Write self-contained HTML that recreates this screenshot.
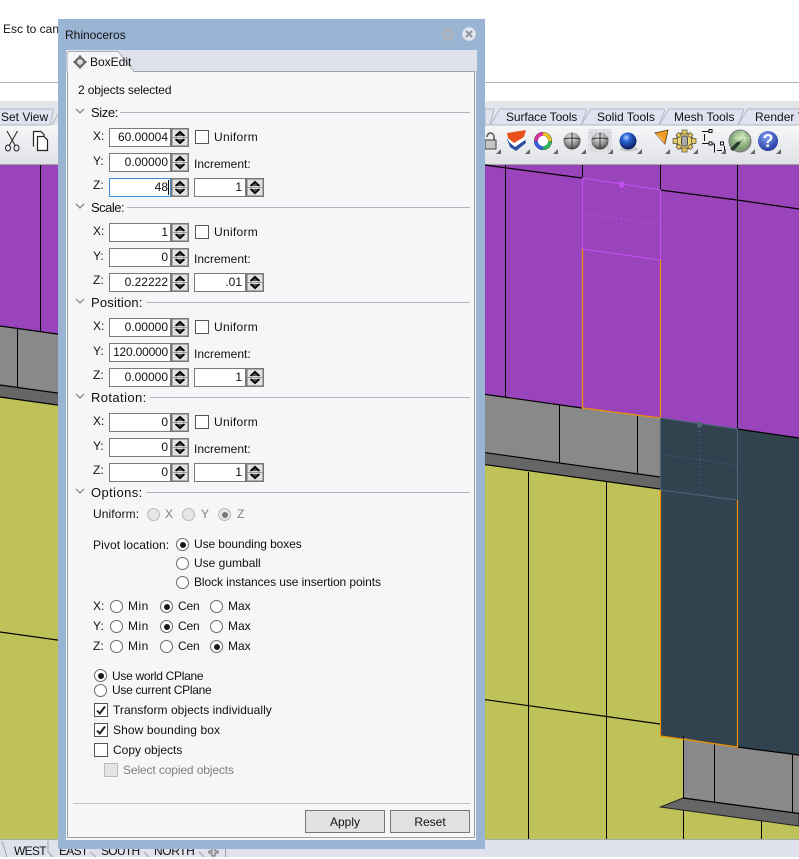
<!DOCTYPE html>
<html><head><meta charset="utf-8"><title>Rhinoceros BoxEdit</title>
<style>
html,body{margin:0;padding:0}
body{width:799px;height:857px;overflow:hidden;position:relative;background:#fff;font:12px/16px "Liberation Sans",sans-serif;color:#111}
.a,.t,.n,.r,.c,.b{position:absolute}
.t{white-space:nowrap;height:16px}
.d{color:#808080}
.n{box-sizing:border-box;height:19px;background:#fff;border:1px solid #7a7a7a;text-align:right;line-height:17px;padding-right:2px;color:#111}
.r{box-sizing:border-box;width:13px;height:13px;border:1px solid #6a6a6a;border-radius:50%;background:#fff}
.r.on::after{content:"";position:absolute;left:2.5px;top:2.5px;width:6px;height:6px;border-radius:50%;background:#1a1a1a}
.r.off{background:#e6e6e6;border-color:#b8b8b8}
.r.off.on::after{background:#777}
.c{box-sizing:border-box;width:14px;height:14px;border:1px solid #555;background:#fff;left:94px}
.b{box-sizing:border-box;top:810px;height:23px;width:80px;background:#e1e1e1;border:1px solid #777;text-align:center;line-height:23px;color:#111}
.h{font-size:13px}
.u{letter-spacing:.3px}
.ln{position:absolute;height:1px;background:#b4b4bc;top:112px}
svg{position:absolute;overflow:visible}
.g{position:absolute;left:0;width:799px;height:0}
.sp{width:18px;height:19px}
.bt{letter-spacing:-.7px}
</style></head><body>

<svg width="0" height="0" style="left:0;top:0"><defs>
<symbol id="spin" viewBox="0 0 18 19"><rect x=".75" y=".75" width="16.500" height="17.500" fill="#e2e2e2" stroke="#777" stroke-width="1.500"/><line x1="1" y1="9.500" x2="17" y2="9.500" stroke="#999"/><path d="M4.500 8 L9 3.800 L13.500 8" fill="#555" stroke="#000" stroke-width="1.800"/><path d="M4.500 11 L9 15.200 L13.500 11" fill="#555" stroke="#000" stroke-width="1.800"/></symbol>
<symbol id="chev" viewBox="0 0 10 6"><path d="M1 1 L5 5 L9 1" fill="none" stroke="#8a8a8a" stroke-width="1.300"/></symbol>
<symbol id="tick" viewBox="0 0 14 14"><path d="M3 7.500 L5.800 10.500 L11 3.500" fill="none" stroke="#222" stroke-width="2"/></symbol>
<radialGradient id="gs" cx=".45" cy=".3" r=".75"><stop offset="0" stop-color="#eee"/><stop offset=".55" stop-color="#999"/><stop offset="1" stop-color="#333"/></radialGradient>
<radialGradient id="bs" cx=".4" cy=".3" r=".75"><stop offset="0" stop-color="#bcd4ff"/><stop offset=".3" stop-color="#2a66d8"/><stop offset="1" stop-color="#08124a"/></radialGradient>
<radialGradient id="hs" cx=".4" cy=".3" r=".8"><stop offset="0" stop-color="#7f9df0"/><stop offset="1" stop-color="#1a2f98"/></radialGradient>
<radialGradient id="gl" cx=".55" cy=".35" r=".7"><stop offset="0" stop-color="#cfe8b8"/><stop offset=".7" stop-color="#7da274"/><stop offset="1" stop-color="#8a8f88"/></radialGradient>
<linearGradient id="tb" x1="0" y1="0" x2="0" y2="1"><stop offset="0" stop-color="#f6f7f8"/><stop offset="1" stop-color="#dfe1e6"/></linearGradient>
</defs></svg>

<!-- chrome and scene -->
<svg width="799" height="857" viewBox="0 0 799 857" style="left:0;top:0">
<rect x="0" y="82" width="799" height="1" fill="#a9b0b8"/>
<rect x="0" y="101" width="799" height="25" fill="#e3e5ea"/>
<rect x="0" y="125" width="799" height="40" fill="url(#tb)"/>
<rect x="0" y="164" width="799" height="1" fill="#a0a2a8"/>
<!-- tabs -->
<path d="M-5 125 V109 H50 Q54 109 53 112 L50 125Z" fill="#dfe3f0" stroke="#b4b6c4"/>
<path d="M52 125 L58 114" stroke="#b4b6c4" fill="none"/>
<path d="M485 125 V109 H494 L490 125Z" fill="#dfe3f0" stroke="#b4b6c4"/>
<path d="M490 125 L500 109 H584 Q588 109 586 112 L581 125Z" fill="#dfe3f0" stroke="#b4b6c4"/>
<path d="M581 125 L591 109 H662 Q666 109 664 112 L659 125Z" fill="#dfe3f0" stroke="#b4b6c4"/>
<path d="M659 125 L669 109 H741 Q745 109 743 112 L738 125Z" fill="#dfe3f0" stroke="#b4b6c4"/>
<path d="M738 125 L748 109 H805 V125Z" fill="#dfe3f0" stroke="#b4b6c4"/>

<!-- viewport -->
<rect x="0" y="165" width="799" height="674" fill="#bfc159"/>
<path d="M0 165 H799 V438 L737 429 L660 418 L582 408 L485 395 L0 326Z" fill="#9a44bc"/>
<path d="M0 326 L485 395 L582 408 L660 418 V477 L0 385Z" fill="#898989"/>
<path d="M0 385 L660 477 V489 L0 397Z" fill="#666"/>
<path d="M660 418 L737 429 L799 438 V755 L737 747 L660 736Z" fill="#30434f"/>
<path d="M683 738 L737 747 L799 755 V813.500 L683 798Z" fill="#898989"/>
<path d="M660.500 807 L683 798 L799 813.500 V826Z" fill="#666" stroke="#222"/>
<g stroke="#000" stroke-width="1" fill="none" shape-rendering="crispEdges">
<path d="M40.500 165 V332 M17.500 328 V387 M505.500 165 V397 M582.500 165 V178 M660.500 165 V190 M737.500 165 V429"/>
<path d="M559.500 405 V463 M637.500 416 V473 M528.500 472 V839 M606.500 482 V839 M714.500 744 V802 M792.500 755 V813 M683.500 810 V839 M761.500 821 V839 M683.500 736 V798"/>
</g>
<g stroke="#000" stroke-width="1.200" fill="none">
<path d="M485 165 L582 178 M660 190 L737 200 L799 209"/>
<path d="M0 326 L582 408 M737 429 L799 438 M660 477 L0 385 M660 489 L0 397 M0 632 L660 724 M737 747 L799 755 M683 798 L799 813.500"/>
</g>
<!-- selection purple -->
<path d="M582.500 178 L660.500 190 V260 L582.500 249Z" fill="none" stroke="#c050f0" stroke-width="1.100"/>
<rect x="619" y="182" width="5" height="5" fill="#c050f0"/>
<path d="M621.500 187 V252 M584 214 L658 224" stroke="#c050f0" stroke-width="1.300" stroke-dasharray="1 3" fill="none"/>
<path d="M582.500 249 V408 L660.500 418 V260" fill="none" stroke="#f09000" stroke-width="1.200"/>
<!-- selection dark -->
<path d="M660.500 418 L737.500 429 V500 L660.500 490Z" fill="none" stroke="#4a6478" stroke-width="1.100"/>
<rect x="697" y="422" width="5" height="5" fill="#4a6478"/>
<path d="M699.500 427 V491 M664 455 L737 465" stroke="#4a6478" stroke-width="1.300" stroke-dasharray="1 3" fill="none"/>
<path d="M660.500 490 V736 L737.500 747 V500" fill="none" stroke="#f09000" stroke-width="1.200"/>
<!-- bottom bar -->
<rect x="0" y="839" width="799" height="18" fill="#dfe2ec"/>
<rect x="0" y="839" width="799" height="1" fill="#a0a8b0"/>
<path d="M2 841 L7 857 M48 841 V852 L53 857 M90 852 L96 857 M144 852 L149 857 M199 852 L204 857 M225.500 846 V857" stroke="#a0a4b0" fill="none"/>
<path d="M212 849 V851 H209 V853 H212 V856 H215 V853 H218 V851 H215 V849" stroke="#666" fill="none"/>

<!-- left toolbar icons -->
<g fill="none" stroke="#222" stroke-width="1">
<path d="M7 131 L15.500 146 M17.500 131 L9 146"/><ellipse cx="8" cy="148" rx="2.500" ry="3"/><ellipse cx="16.500" cy="148" rx="2.500" ry="3"/>
<path d="M33.500 146.500 V131.500 H41 L44 134.500 V137" fill="#fff" stroke-width="1.200"/><path d="M37.500 136.500 H44 L47.500 140 V150.500 H37.500Z" fill="#fff" stroke-width="1.200"/>
</g>

<!-- right toolbar icons -->
<path d="M487 137 a3.500 4 0 0 1 7 0 v3" fill="none" stroke="#666" stroke-width="1.800"/>
<rect x="485" y="140" width="11" height="9" fill="#c4c4c4" stroke="#444"/>
<path d="M507 139 L524 135 L526 143 L516 151 L510 147Z" fill="#2f4fa0"/>
<path d="M507 137 L526 135 L525 140 L515 147 L509 142Z" fill="#fff"/>
<path d="M507 133 L526 130 L524 137 L514 143 L508 138Z" fill="#e8501e"/>
<circle cx="543" cy="141" r="9" fill="#222"/>
<g fill="none" stroke-width="3.400">
<path d="M543 134 A7 7 0 0 1 550 141" stroke="#e8c020"/>
<path d="M550 141 A7 7 0 0 1 543 148" stroke="#30b860"/>
<path d="M543 148 A7 7 0 0 1 536 141" stroke="#3060e0"/>
<path d="M536 141 A7 7 0 0 1 543 134" stroke="#d830a0"/>
</g>
<circle cx="543" cy="141" r="5.200" fill="#fff"/>
<circle cx="572" cy="141" r="8.500" fill="url(#gs)"/>
<path d="M563.500 139 Q572 137 580.500 139 M572 132.500 V149.500" stroke="#333" stroke-width="1" fill="none"/>
<rect x="588" y="129" width="24" height="24" fill="#e2e2e6"/>
<path d="M588 133 H612 M588 137 H612 M588 145 H612 M588 149 H612 M592 129 V153 M596 129 V153 M604 129 V153 M608 129 V153" stroke="#c4c4c8" stroke-dasharray="1 1" fill="none"/>
<circle cx="600" cy="141" r="8.500" fill="url(#gs)"/>
<path d="M591.500 139 Q600 137 608.500 139 M600 132.500 V149.500" stroke="#333" stroke-width="1" fill="none"/>
<ellipse cx="629" cy="149" rx="9" ry="2.500" fill="#c8c8c8"/>
<circle cx="628" cy="141" r="8.500" fill="url(#bs)"/>
<path d="M655 133 L668 130 L665 144Z" fill="#f09a20" stroke="#5a3a10" stroke-width=".8"/>
<path d="M655 133 L662 138 L665 144" fill="#ffd890" opacity=".8"/>
<g transform="translate(684.500 141)">
<circle r="8.500" fill="#f0d878" stroke="#554" stroke-width="1"/>
<path d="M-2.500 -11 H2.500 V-7 H-2.500Z M-2.500 7 H2.500 V11 H-2.500Z M-11.500 -2.500 H-7 V2.500 H-11.500Z M7 -2.500 H11.500 V2.500 H7Z M-8.500 -6 L-6 -8.500 L-3 -6 L-6 -3Z M8.500 -6 L6 -8.500 L3 -6 L6 -3Z M-8.500 6 L-6 8.500 L-3 6 L-6 3Z M8.500 6 L6 8.500 L3 6 L6 3Z" fill="#e8c860" stroke="#554" stroke-width=".7"/>
<rect x="-3" y="-5" width="6" height="10" rx="2" fill="#aaa" stroke="#333" stroke-width=".8"/>
</g>
<g fill="none" stroke="#111" stroke-width="1">
<path d="M702 131.500 H709 M702 143.500 H710 M704.500 134 V141 M711 144 H714.500 V152.500 M724.500 146 V152.500 M717 150.500 H722"/>
<rect x="709" y="129.500" width="3" height="3" fill="#fff"/><rect x="709" y="142" width="3" height="3" fill="#fff"/><rect x="720.500" y="142" width="3" height="3" fill="#fff"/>
</g>
<circle cx="740" cy="141" r="11" fill="url(#gl)" stroke="#777"/>
<path d="M730 149 L737 142 L742 141 L744 137 L739 145 L733 151Z" fill="#2a3a2a"/>
<path d="M742 131 L746 142 M734 138 L750 138" stroke="#e0f0d0" stroke-width=".7" fill="none"/>
<circle cx="768" cy="141" r="10" fill="url(#hs)"/>
<g fill="#666">
<path d="M501 149 V154 H496Z M530 149 V154 H525Z M558 149 V154 H553Z M586 149 V154 H581Z M613 149 V154 H608Z M642 149 V154 H637Z M670 149 V154 H665Z M698 149 V154 H693Z M726 149 V154 H721Z M755 149 V154 H750Z M781 149 V154 H776Z"/>
</g>
</svg>

<div class="t" style="left:3px;top:21px">Esc to cancel</div>
<div class="t" style="left:1px;top:109px">Set View</div>
<div class="t" style="left:506px;top:109px;letter-spacing:-.1px">Surface Tools</div>
<div class="t" style="left:597px;top:109px">Solid Tools</div>
<div class="t" style="left:674px;top:109px">Mesh Tools</div>
<div class="t" style="left:755px;top:109px">Render Tools</div>
<div class="t" style="left:759px;top:132px;font:bold 18px/18px 'Liberation Sans',sans-serif;color:#fff;height:18px;width:18px;text-align:center">?</div>
<div class="t bt" style="left:14px;top:843px">WEST</div>
<div class="t bt" style="left:59px;top:843px">EAST</div>
<div class="t bt" style="left:101px;top:843px">SOUTH</div>
<div class="t bt" style="left:154px;top:843px;letter-spacing:-.4px">NORTH</div>

<!-- dialog -->
<div class="a" style="left:58px;top:19px;width:427px;height:830px;background:#9ab4d3"></div>
<div class="a" style="left:66px;top:50px;width:411px;height:21px;background:#dfe2ec"></div>
<div class="a" style="left:66px;top:71px;width:410px;height:769px;background:#f5f6f8"></div>
<div class="a" style="left:67px;top:71px;width:408px;height:767px;box-sizing:border-box;background:#f5f6f8;border:1px solid #a0a0a0"></div>
<svg width="80" height="24" style="left:60px;top:50px">
<path d="M7 21.500 V4 Q7 1.500 10 1.500 H58 L74 21.500" fill="#f5f6f8" stroke="#a8a8b4"/>
<rect x="8" y="20" width="65" height="3" fill="#f5f6f8"/>
<g fill="none" stroke="#555" stroke-width="1">
<path d="M20 6 L26 12 L20 18 L14 12Z"/><circle cx="20" cy="12" r="3.500" fill="#ddd"/><path d="M20 5 V8 M20 16 V19 M13 12 H16 M24 12 H27"/>
</g>
</svg>
<div class="t" style="left:65px;top:27px">Rhinoceros</div>
<div class="t" style="left:90px;top:54px">BoxEdit</div>
<svg width="40" height="18" style="left:440px;top:25px">
<g transform="translate(8 9)" fill="#aab4c0"><circle r="5"/><path d="M-1.800 -7 H1.800 V7 H-1.800Z M-7 -1.800 H7 V1.800 H-7Z M-5.800 -3.300 L-3.300 -5.800 L5.800 3.300 L3.300 5.800Z M5.800 -3.300 L3.300 -5.800 L-5.800 3.300 L-3.300 5.800Z"/><circle r="2" fill="#9ab4d3"/></g>
<circle cx="29" cy="9" r="6.800" fill="#e2e6ee"/><path d="M26 6 L32 12 M32 6 L26 12" stroke="#8c94a0" stroke-width="2"/>
</svg>
<div class="t" style="left:78px;top:82px;letter-spacing:-.15px">2 objects selected</div>

<!-- Size -->
<div class="g" style="top:0">
<svg width="10" height="6" style="left:75px;top:108px"><use href="#chev"/></svg>
<div class="t h" style="left:91px;top:105px;letter-spacing:-.4px">Size:</div><div class="ln" style="left:120px;width:350px"></div>
<div class="t" style="left:93px;top:128px">X:</div><div class="t" style="left:93px;top:153px">Y:</div><div class="t" style="left:93px;top:177px">Z:</div>
<div class="n" style="left:109px;top:128px;width:62px;padding-right:2px">60.00004</div><svg class="sp" style="left:171px;top:128px"><use href="#spin"/></svg>
<div class="c" style="left:195px;top:130px"></div><div class="t u" style="left:214px;top:129px">Uniform</div>
<div class="n" style="left:109px;top:153px;width:62px">0.00000</div><svg class="sp" style="left:171px;top:153px"><use href="#spin"/></svg>
<div class="t" style="left:194px;top:156px">Increment:</div>
<div class="n" style="left:109px;top:178px;width:62px;border-color:#3f8fd8">48</div><div class="a" style="left:168px;top:180px;width:1px;height:15px;background:#000"></div><svg class="sp" style="left:171px;top:178px"><use href="#spin"/></svg>
<div class="n" style="left:194px;top:178px;width:52px;padding-right:3px">1</div><svg class="sp" style="left:246px;top:178px"><use href="#spin"/></svg>
</div>

<!-- Scale -->
<div class="g" style="top:95px">
<svg width="10" height="6" style="left:75px;top:108px"><use href="#chev"/></svg>
<div class="t h" style="left:91px;top:105px;letter-spacing:-.5px">Scale:</div><div class="ln" style="left:127px;width:343px"></div>
<div class="t" style="left:93px;top:128px">X:</div><div class="t" style="left:93px;top:153px">Y:</div><div class="t" style="left:93px;top:177px">Z:</div>
<div class="n" style="left:109px;top:128px;width:62px">1</div><svg class="sp" style="left:171px;top:128px"><use href="#spin"/></svg>
<div class="c" style="left:195px;top:130px"></div><div class="t u" style="left:214px;top:129px">Uniform</div>
<div class="n" style="left:109px;top:153px;width:62px">0</div><svg class="sp" style="left:171px;top:153px"><use href="#spin"/></svg>
<div class="t" style="left:194px;top:156px">Increment:</div>
<div class="n" style="left:109px;top:178px;width:62px">0.22222</div><svg class="sp" style="left:171px;top:178px"><use href="#spin"/></svg>
<div class="n" style="left:194px;top:178px;width:52px;padding-right:3px">.01</div><svg class="sp" style="left:246px;top:178px"><use href="#spin"/></svg>
</div>

<!-- Position -->
<div class="g" style="top:190px">
<svg width="10" height="6" style="left:75px;top:108px"><use href="#chev"/></svg>
<div class="t h" style="left:91px;top:105px;letter-spacing:.2px">Position:</div><div class="ln" style="left:146px;width:324px"></div>
<div class="t" style="left:93px;top:128px">X:</div><div class="t" style="left:93px;top:153px">Y:</div><div class="t" style="left:93px;top:177px">Z:</div>
<div class="n" style="left:109px;top:128px;width:62px">0.00000</div><svg class="sp" style="left:171px;top:128px"><use href="#spin"/></svg>
<div class="c" style="left:195px;top:130px"></div><div class="t u" style="left:214px;top:129px">Uniform</div>
<div class="n" style="left:109px;top:153px;width:62px;letter-spacing:-.2px">120.00000</div><svg class="sp" style="left:171px;top:153px"><use href="#spin"/></svg>
<div class="t" style="left:194px;top:156px">Increment:</div>
<div class="n" style="left:109px;top:178px;width:62px">0.00000</div><svg class="sp" style="left:171px;top:178px"><use href="#spin"/></svg>
<div class="n" style="left:194px;top:178px;width:52px;padding-right:3px">1</div><svg class="sp" style="left:246px;top:178px"><use href="#spin"/></svg>
</div>

<!-- Rotation -->
<div class="g" style="top:285px">
<svg width="10" height="6" style="left:75px;top:108px"><use href="#chev"/></svg>
<div class="t h" style="left:91px;top:105px;letter-spacing:.4px">Rotation:</div><div class="ln" style="left:150px;width:320px"></div>
<div class="t" style="left:93px;top:128px">X:</div><div class="t" style="left:93px;top:153px">Y:</div><div class="t" style="left:93px;top:177px">Z:</div>
<div class="n" style="left:109px;top:128px;width:62px">0</div><svg class="sp" style="left:171px;top:128px"><use href="#spin"/></svg>
<div class="c" style="left:195px;top:130px"></div><div class="t u" style="left:214px;top:129px">Uniform</div>
<div class="n" style="left:109px;top:153px;width:62px">0</div><svg class="sp" style="left:171px;top:153px"><use href="#spin"/></svg>
<div class="t" style="left:194px;top:156px">Increment:</div>
<div class="n" style="left:109px;top:178px;width:62px">0</div><svg class="sp" style="left:171px;top:178px"><use href="#spin"/></svg>
<div class="n" style="left:194px;top:178px;width:52px;padding-right:3px">1</div><svg class="sp" style="left:246px;top:178px"><use href="#spin"/></svg>
</div>

<!-- Options -->
<svg width="10" height="6" style="left:75px;top:488px"><use href="#chev"/></svg>
<div class="t h" style="left:91px;top:485px;letter-spacing:.4px">Options:</div><div class="ln" style="left:146px;width:324px;top:492px"></div>
<div class="t" style="left:93px;top:506px;letter-spacing:.1px">Uniform:</div>
<div class="r off" style="left:147px;top:508px"></div><div class="t d" style="left:165px;top:506px">X</div>
<div class="r off" style="left:182px;top:508px"></div><div class="t d" style="left:201px;top:506px">Y</div>
<div class="r off on" style="left:218px;top:508px"></div><div class="t d" style="left:237px;top:506px">Z</div>

<div class="t" style="left:93px;top:537px;letter-spacing:.1px">Pivot location:</div>
<div class="r on" style="left:176px;top:538px"></div><div class="t" style="left:194px;top:536px;letter-spacing:-.1px">Use bounding boxes</div>
<div class="r" style="left:176px;top:557px"></div><div class="t" style="left:194px;top:555px">Use gumball</div>
<div class="r" style="left:176px;top:576px"></div><div class="t" style="left:194px;top:574px;letter-spacing:-.09px">Block instances use insertion points</div>

<div class="t" style="left:93px;top:598px">X:</div>
<div class="r" style="left:110px;top:600px"></div><div class="t" style="left:128px;top:598px;letter-spacing:.5px">Min</div>
<div class="r on" style="left:160px;top:600px"></div><div class="t" style="left:178px;top:598px;letter-spacing:-.2px">Cen</div>
<div class="r" style="left:210px;top:600px"></div><div class="t" style="left:228px;top:598px">Max</div>
<div class="t" style="left:93px;top:618px">Y:</div>
<div class="r" style="left:110px;top:620px"></div><div class="t" style="left:128px;top:618px;letter-spacing:.5px">Min</div>
<div class="r on" style="left:160px;top:620px"></div><div class="t" style="left:178px;top:618px;letter-spacing:-.2px">Cen</div>
<div class="r" style="left:210px;top:620px"></div><div class="t" style="left:228px;top:618px">Max</div>
<div class="t" style="left:93px;top:638px">Z:</div>
<div class="r" style="left:110px;top:640px"></div><div class="t" style="left:128px;top:638px;letter-spacing:.5px">Min</div>
<div class="r" style="left:160px;top:640px"></div><div class="t" style="left:178px;top:638px;letter-spacing:-.2px">Cen</div>
<div class="r on" style="left:210px;top:640px"></div><div class="t" style="left:228px;top:638px">Max</div>

<div class="r on" style="left:94px;top:669px"></div><div class="t" style="left:112px;top:668px;letter-spacing:-.3px">Use world CPlane</div>
<div class="r" style="left:94px;top:684px"></div><div class="t" style="left:112px;top:682px;letter-spacing:-.3px">Use current CPlane</div>

<div class="c" style="top:703px"></div><svg width="14" height="14" style="left:94px;top:703px"><use href="#tick"/></svg><div class="t" style="left:113px;top:702px;letter-spacing:.04px">Transform objects individually</div>
<div class="c" style="top:723px"></div><svg width="14" height="14" style="left:94px;top:723px"><use href="#tick"/></svg><div class="t" style="left:113px;top:722px;letter-spacing:.1px">Show bounding box</div>
<div class="c" style="top:743px"></div><div class="t" style="left:113px;top:742px">Copy objects</div>
<div class="c" style="left:104px;top:763px;background:#e4e4e4;border-color:#bbb"></div><div class="t d" style="left:123px;top:762px;letter-spacing:-.12px">Select copied objects</div>

<div class="a" style="left:73px;top:803px;width:397px;height:1px;background:#c0c0c4"></div>
<div class="b" style="left:305px">Apply</div>
<div class="b" style="left:390px">Reset</div>
</body></html>
